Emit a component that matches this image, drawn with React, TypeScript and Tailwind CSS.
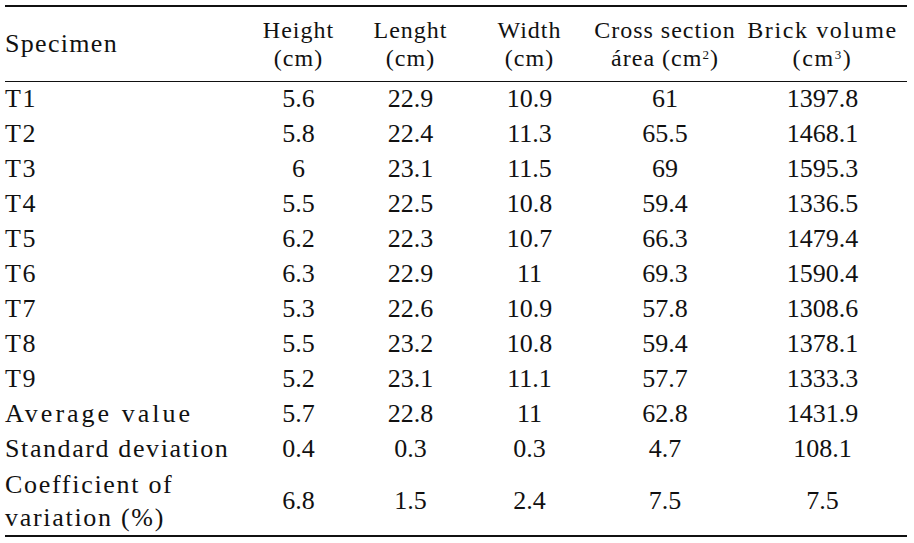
const rows: [string, string, string, string, string, string][] = [
  ['T1', '5.6', '22.9', '10.9', '61', '1397.8'],
  ['T2', '5.8', '22.4', '11.3', '65.5', '1468.1'],
  ['T3', '6', '23.1', '11.5', '69', '1595.3'],
  ['T4', '5.5', '22.5', '10.8', '59.4', '1336.5'],
  ['T5', '6.2', '22.3', '10.7', '66.3', '1479.4'],
  ['T6', '6.3', '22.9', '11', '69.3', '1590.4'],
  ['T7', '5.3', '22.6', '10.9', '57.8', '1308.6'],
  ['T8', '5.5', '23.2', '10.8', '59.4', '1378.1'],
  ['T9', '5.2', '23.1', '11.1', '57.7', '1333.3'],
  ['Average value', '5.7', '22.8', '11', '62.8', '1431.9'],
  ['Standard deviation', '0.4', '0.3', '0.3', '4.7', '108.1'],
];

export default function App() {
  return (
    <div className="min-h-[543px] w-[914px] bg-white pl-[5px] pt-[5px] text-[#111] font-serif">
      <table className="w-[902px] table-fixed border-collapse font-[family-name:Liberation_Serif,serif] text-[26px]">
        <colgroup>
          <col className="w-[238px]" />
          <col className="w-[111px]" />
          <col className="w-[113px]" />
          <col className="w-[125px]" />
          <col className="w-[146px]" />
          <col className="w-[169px]" />
        </colgroup>
        <thead>
          <tr className="h-[75px] border-t-2 border-b-[1.5px] border-[#111] text-[24px] leading-[28px] tracking-[1px]">
            <th className="p-0 text-left align-middle text-[26px] font-normal tracking-[1.3px]">Specimen</th>
            <th className="p-0 text-center font-normal">
              Height
              <br />
              (cm)
            </th>
            <th className="p-0 text-center font-normal">
              Lenght
              <br />
              (cm)
            </th>
            <th className="p-0 text-center font-normal">
              Width
              <br />
              (cm)
            </th>
            <th className="p-0 text-center font-normal whitespace-nowrap">
              Cross section
              <br />
              área (cm<sup className="text-[13px]">2</sup>)
            </th>
            <th className="p-0 text-center font-normal whitespace-nowrap tracking-[1.6px]">
              Brick volume
              <br />
              (cm<sup className="text-[13px]">3</sup>)
            </th>
          </tr>
        </thead>
        <tbody>
          {rows.map((r) => (
            <tr key={r[0]} className="h-[35px] leading-[26px]">
              <td
                className={
                  r[0] === 'Average value'
                    ? 'p-0 text-left whitespace-nowrap tracking-[3px]'
                    : 'p-0 text-left whitespace-nowrap tracking-[1.6px]'
                }
              >
                {r[0]}
              </td>
              {r.slice(1).map((v, i) => (
                <td key={i} className="p-0 text-center">
                  {v}
                </td>
              ))}
            </tr>
          ))}
          <tr className="h-[70px] border-b-2 border-[#111] leading-[33px]">
            <td className="p-0 text-left tracking-[1.7px] whitespace-nowrap">
              Coefficient of
              <br />
              variation (%)
            </td>
            <td className="p-0 text-center">6.8</td>
            <td className="p-0 text-center">1.5</td>
            <td className="p-0 text-center">2.4</td>
            <td className="p-0 text-center">7.5</td>
            <td className="p-0 text-center">7.5</td>
          </tr>
        </tbody>
      </table>
    </div>
  );
}
